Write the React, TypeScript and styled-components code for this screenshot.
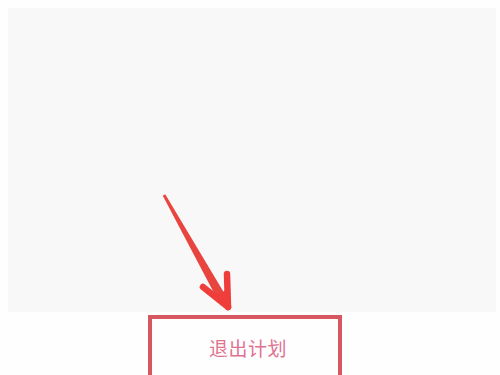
import React from "react";
import styled, { createGlobalStyle } from "styled-components";

const Global = createGlobalStyle`
  html, body { margin: 0; padding: 0; background: #fefefe; }
  body { font-family: "Noto Sans CJK SC", "Noto Sans", sans-serif; overflow: hidden; }
`;

const Page = styled.div`
  position: relative;
  width: 500px;
  height: 375px;
  overflow: hidden;
  display: flex;
  flex-direction: column;
  padding-top: 8px;
  box-sizing: border-box;
`;

const Panel = styled.div`
  margin: 0 4px 0 8px;
  height: 304px;
  background: #f8f8f8;
  flex-shrink: 0;
`;

const ExitBox = styled.div`
  margin: 3px 0 0 148px;
  width: 194px;
  height: 80px;
  box-sizing: border-box;
  border: 4px solid #d6575f;
  display: flex;
  justify-content: center;
  padding: 16px 0 0 6px;
  flex-shrink: 0;
`;

const ExitText = styled.span`
  font-size: 19px;
  line-height: 26px;
  color: #de7291;
  letter-spacing: 0.5px;
`;

const ArrowLayer = styled.svg`
  position: absolute;
  left: 0;
  top: 0;
  pointer-events: none;
`;

export default function App() {
  return (
    <>
      <Global />
      <Page>
        <Panel />
        <ExitBox>
          <ExitText>退出计划</ExitText>
        </ExitBox>
        <ArrowLayer width="500" height="375" viewBox="0 0 500 375">
          <polygon
            points="162.8,195.8 165.2,194.2 226,296 218,300.5"
            fill="#e8453f"
          />
          <g stroke="#ee3d3a" strokeWidth="6.5" strokeLinecap="round" fill="none">
            <line x1="203" y1="287" x2="228" y2="307" />
            <line x1="227" y1="274" x2="228" y2="307" />
          </g>
          <polygon points="216,296 228,309 229,288" fill="#ee3d3a" />
        </ArrowLayer>
      </Page>
    </>
  );
}
